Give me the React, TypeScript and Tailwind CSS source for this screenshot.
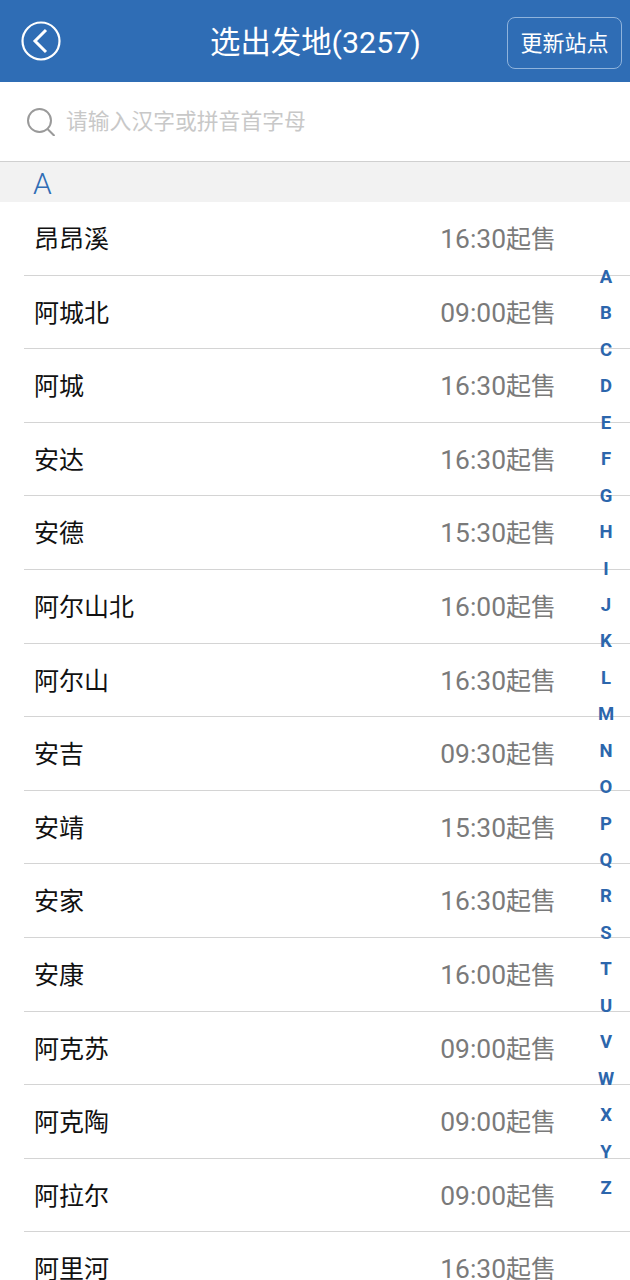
const rows: [string, string][] = [
  ["昂昂溪", "16:30"],["阿城北", "09:00"],["阿城", "16:30"],["安达", "16:30"],["安德", "15:30"],
  ["阿尔山北", "16:00"],["阿尔山", "16:30"],["安吉", "09:30"],["安靖", "15:30"],["安家", "16:30"],
  ["安康", "16:00"],["阿克苏", "09:00"],["阿克陶", "09:00"],["阿拉尔", "09:00"],["阿里河", "16:30"],
];
const letters = "ABCDEFGHIJKLMNOPQRSTUVWXYZ".split("");
export default function App() {
  return (
    <div className="relative w-[630px] h-[1280px] overflow-hidden bg-white font-['Roboto','Noto_Sans_CJK_SC',sans-serif]">
      <header className="h-[82px] bg-[#2f6db5] flex items-center justify-between pl-[21px] pr-[8px] relative">
        <svg width="40" height="40" viewBox="0 0 40 40" fill="none" stroke="white" strokeWidth="2.2"><circle cx="20" cy="20" r="18.5"/><path d="M25 9 L14 20 L25 31" strokeWidth="3"/></svg>
        <div className="absolute left-[210px] top-[23px] text-white text-[30.4px] leading-[40px]">选出发地(3257)</div>
        <div className="w-[115px] h-[52px] mt-[4px] border border-[#8fb3dc] rounded-[8px] flex items-center justify-center text-white text-[22px]">更新站点</div>
      </header>
      <div className="h-[80px] border-b border-[#d0d0d0] flex items-center pl-[27px] gap-[11px]">
        <svg width="28" height="28" viewBox="0 0 28 28" fill="none" stroke="#9a9a9a" strokeWidth="2"><circle cx="12.5" cy="12.5" r="11.5"/><path d="M20.5 21 L27.5 28"/></svg>
        <span className="text-[21.8px] text-[#c8c8c8] pt-[2px]">请输入汉字或拼音首字母</span>
      </div>
      <div className="h-[40px] bg-[#f2f2f2] pl-[33px] text-[#2f6db5] text-[30px] font-light leading-[44px]">A</div>
      <div className="pl-[24px]">
        {rows.map(([n, t]) => (
          <div key={n} className="h-[73.6px] border-b border-[#d4d4d4] flex items-center justify-between pl-[10px] pr-[74px] pt-[3px]">
            <span className="text-[25px] text-[#111]">{n}</span>
            <span className="text-[26.4px] text-[#7a7a7a]">{t}<span className="text-[25px]">起售</span></span>
          </div>
        ))}
      </div>
      <div className="absolute left-[590px] top-[259px] w-[32px] flex flex-col items-center">
        {letters.map(l => <div key={l} className="h-[36.45px] leading-[36.45px] text-[18.5px] font-bold text-[#2c66ac]">{l}</div>)}
      </div>
    </div>
  );
}
